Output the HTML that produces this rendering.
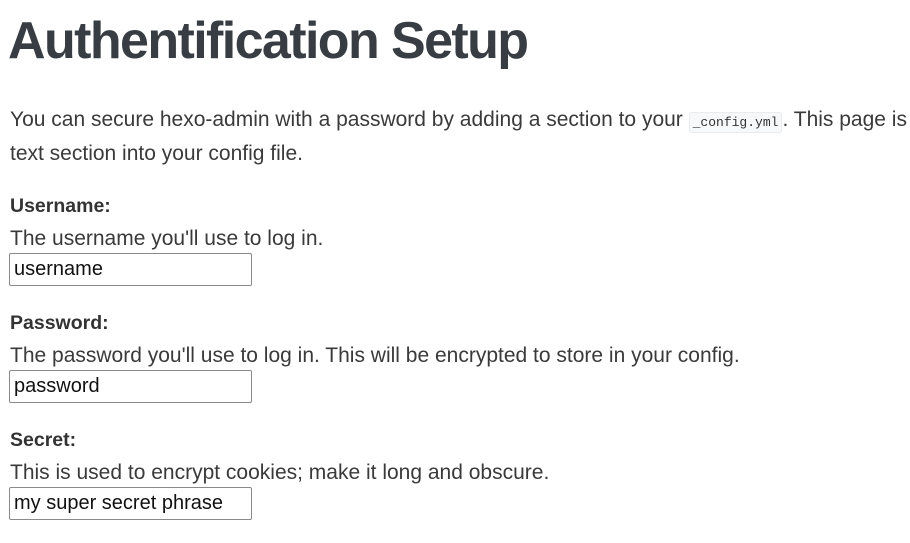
<!DOCTYPE html>
<html><head><style>
body{margin:0;background:#fff;color:#333;font-family:"Liberation Sans",sans-serif;overflow:hidden;width:910px;height:543px}
h1{position:absolute;left:8px;top:6px;margin:0;font-size:52px;font-weight:bold;letter-spacing:-1.6px;color:#373d42;line-height:70px;white-space:nowrap}
.p{position:absolute;left:10px;font-size:21px;line-height:33px;white-space:nowrap;color:#3a3a3a}
code{font-family:"Liberation Mono",monospace;font-size:13px;background:#f6f8fa;border:1px solid #e8ecef;border-radius:3px;padding:2px 3px;color:#333}
b{font-weight:bold;color:#333;font-size:19.5px}
.in{position:absolute;left:9px;height:31px;border:1px solid #8a8a8a;border-radius:2px;font-size:20px;line-height:31px;padding-left:4px;color:#111;width:237px}
</style></head><body>
<h1>Authentification Setup</h1>
<div class="p" style="top:103px">You can secure hexo-admin with a password by adding a section to your <code>_config.yml</code>. This page is</div>
<div class="p" style="top:137px">text section into your config file.</div>

<div class="p" style="top:189px"><b>Username:</b></div>
<div class="p" style="top:222px">The username you'll use to log in.</div>
<div class="in" style="top:253px">username</div>

<div class="p" style="top:306px"><b>Password:</b></div>
<div class="p" style="top:339px">The password you'll use to log in. This will be encrypted to store in your config.</div>
<div class="in" style="top:370px">password</div>

<div class="p" style="top:423px"><b>Secret:</b></div>
<div class="p" style="top:456px">This is used to encrypt cookies; make it long and obscure.</div>
<div class="in" style="top:487px">my super secret phrase</div>
</body></html>
